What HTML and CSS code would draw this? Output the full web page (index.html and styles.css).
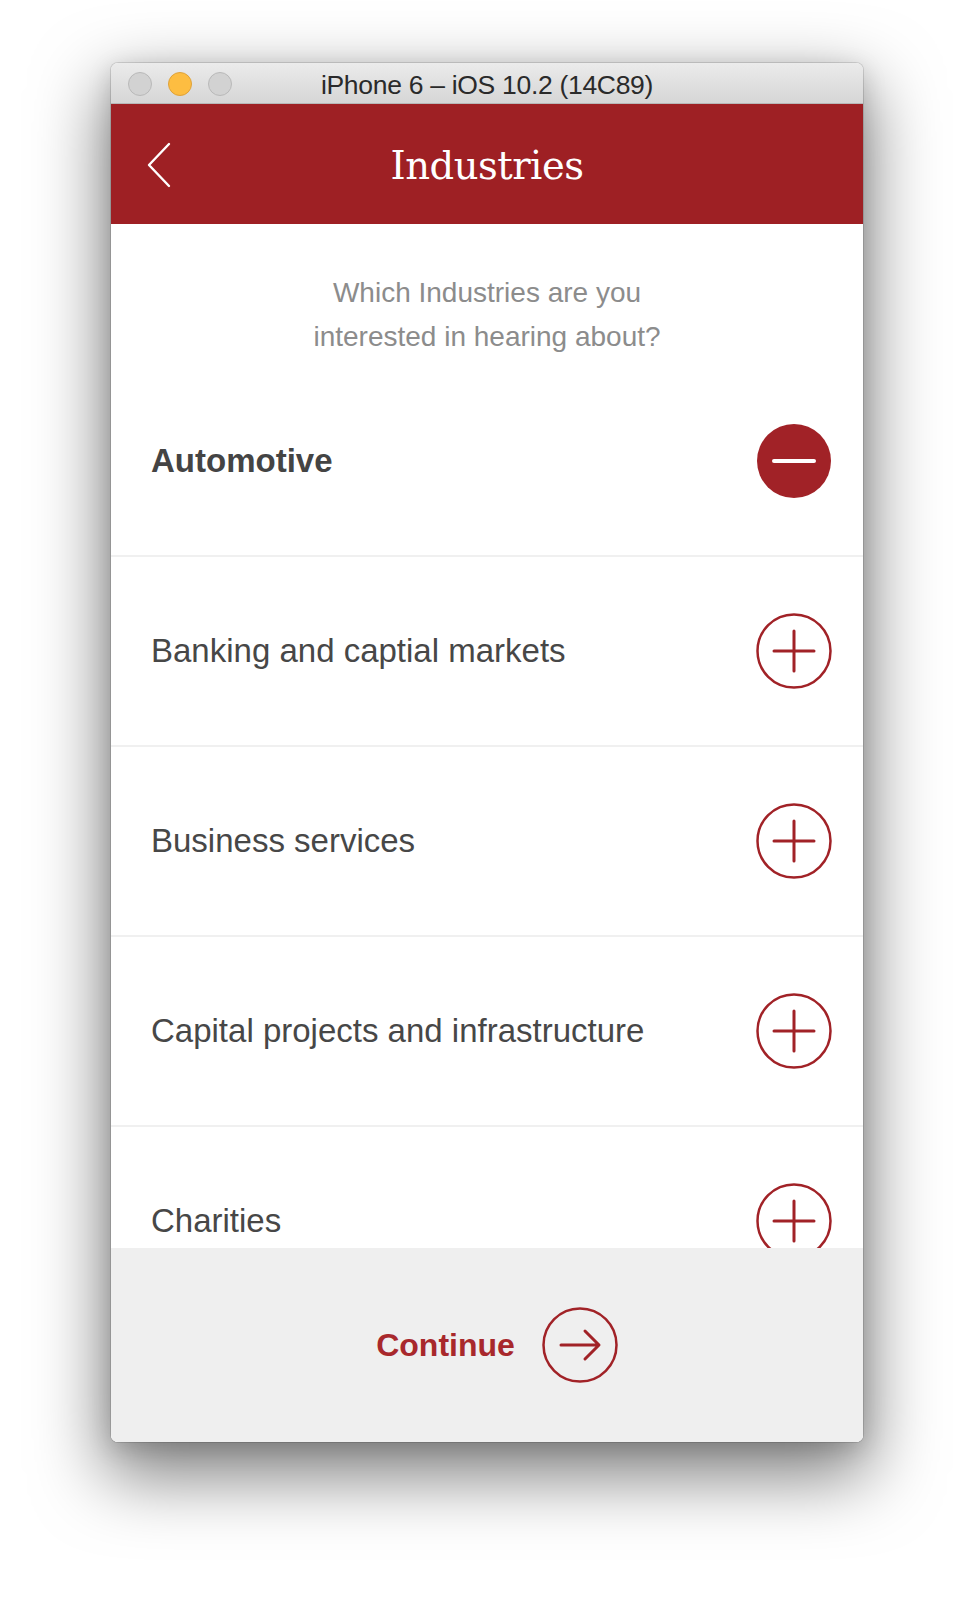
FILE: index.html
```html
<!DOCTYPE html>
<html lang="en">
<head>
<meta charset="utf-8">
<title>Industries</title>
<link rel="stylesheet" href="styles.css">
</head>
<body>
<div class="window">
  <div class="titlebar">
    <div class="lights">
      <span class="light"></span>
      <span class="light light-min"></span>
      <span class="light"></span>
    </div>
    <div class="window-title">iPhone 6 – iOS 10.2 (14C89)</div>
    <div class="titlebar-spacer"></div>
  </div>
  <div class="app">
    <header class="navbar">
      <button class="back" aria-label="Back">
        <svg width="26" height="46" viewBox="0 0 26 46"><path d="M23 2 L3 23 L23 44" fill="none" stroke="#fff" stroke-width="2.4" stroke-linecap="round" stroke-linejoin="round"/></svg>
      </button>
      <h1 class="nav-title">Industries</h1>
    </header>
    <main class="list-area">
      <p class="intro">Which Industries are you<br>interested in hearing about?</p>
      <ul class="list">
        <li class="row row-selected">
          <span class="row-label">Automotive</span>
          <svg class="toggle" width="76" height="76" viewBox="0 0 76 76"><circle cx="38" cy="38" r="37" fill="#a12227"/><line x1="18" y1="38" x2="58" y2="38" stroke="#fff" stroke-width="4" stroke-linecap="round"/></svg>
        </li>
        <li class="row">
          <span class="row-label">Banking and captial markets</span>
          <svg class="toggle" width="76" height="76" viewBox="0 0 76 76"><circle cx="38" cy="38" r="36.5" fill="none" stroke="#a12227" stroke-width="2.5"/><path d="M18 38 H58 M38 18 V58" stroke="#a12227" stroke-width="3" stroke-linecap="round"/></svg>
        </li>
        <li class="row">
          <span class="row-label">Business services</span>
          <svg class="toggle" width="76" height="76" viewBox="0 0 76 76"><circle cx="38" cy="38" r="36.5" fill="none" stroke="#a12227" stroke-width="2.5"/><path d="M18 38 H58 M38 18 V58" stroke="#a12227" stroke-width="3" stroke-linecap="round"/></svg>
        </li>
        <li class="row">
          <span class="row-label">Capital projects and infrastructure</span>
          <svg class="toggle" width="76" height="76" viewBox="0 0 76 76"><circle cx="38" cy="38" r="36.5" fill="none" stroke="#a12227" stroke-width="2.5"/><path d="M18 38 H58 M38 18 V58" stroke="#a12227" stroke-width="3" stroke-linecap="round"/></svg>
        </li>
        <li class="row">
          <span class="row-label">Charities</span>
          <svg class="toggle" width="76" height="76" viewBox="0 0 76 76"><circle cx="38" cy="38" r="36.5" fill="none" stroke="#a12227" stroke-width="2.5"/><path d="M18 38 H58 M38 18 V58" stroke="#a12227" stroke-width="3" stroke-linecap="round"/></svg>
        </li>
      </ul>
    </main>
    <footer class="footer">
      <button class="continue">
        <span class="continue-label">Continue</span>
        <svg width="76" height="76" viewBox="0 0 76 76"><circle cx="38" cy="38" r="36.5" fill="none" stroke="#a12227" stroke-width="2.5"/><path d="M19 38 H56 M43 24 L57 38 L43 52" fill="none" stroke="#a12227" stroke-width="3" stroke-linecap="round" stroke-linejoin="round"/></svg>
      </button>
    </footer>
  </div>
</div>
</body>
</html>
```

FILE: styles.css
```css
* {
  box-sizing: border-box;
}

html, body {
  margin: 0;
  padding: 0;
  background: #ffffff;
}

body {
  font-family: "Liberation Sans", Arial, sans-serif;
  padding: 63px 0 0 111px;
  height: 1602px;
  overflow: hidden;
}

.window {
  width: 752px;
  height: 1379px;
  border-radius: 7px;
  overflow: hidden;
  display: flex;
  flex-direction: column;
  box-shadow: 0 0 0 1px rgba(0, 0, 0, 0.12), 0 28px 70px 6px rgba(0, 0, 0, 0.5), 0 6px 24px rgba(0, 0, 0, 0.15);
}

.titlebar {
  height: 41px;
  flex: none;
  display: grid;
  grid-template-columns: 1fr auto 1fr;
  align-items: center;
  background: linear-gradient(#ebebeb, #d6d6d6);
  border-bottom: 1px solid #b8b8b8;
}

.lights {
  display: flex;
  gap: 16px;
  padding-left: 17px;
  padding-top: 2px;
}

.light {
  width: 24px;
  height: 24px;
  border-radius: 50%;
  background: #d2d2d2;
  border: 1px solid #b9b9b9;
}

.light-min {
  background: #fdbd41;
  border-color: #dfa23a;
}

.window-title {
  text-align: center;
  font-size: 26.5px;
  color: #2a2a2a;
  padding-top: 5px;
  letter-spacing: -0.3px;
  white-space: nowrap;
}

.app {
  flex: 1;
  display: flex;
  flex-direction: column;
  min-height: 0;
  background: #ffffff;
}

.navbar {
  height: 120px;
  flex: none;
  background: #9e2024;
  display: flex;
  align-items: center;
  position: relative;
}

.back {
  position: absolute;
  left: 35px;
  top: 38px;
  background: none;
  border: 0;
  padding: 0;
  line-height: 0;
}

.nav-title {
  flex: 1;
  margin: 0;
  text-align: center;
  font-family: "DejaVu Serif", Georgia, serif;
  font-weight: normal;
  font-size: 38.5px;
  color: #ffffff;
  letter-spacing: -0.5px;
  padding-top: 2px;
}

.list-area {
  flex: 1;
  min-height: 0;
  overflow: hidden;
}

.intro {
  margin: 0;
  padding: 47px 0 8px;
  text-align: center;
  font-size: 28px;
  line-height: 44px;
  color: #8c8c8c;
}

.list {
  list-style: none;
  margin: 0;
  padding: 0;
}

.row {
  height: 190px;
  display: flex;
  align-items: center;
  justify-content: space-between;
  padding: 0 31px 0 40px;
  border-bottom: 2px solid #f0f0f0;
}

.row-label {
  font-size: 33px;
  color: #474747;
}

.row-selected .row-label {
  font-weight: bold;
  color: #444444;
}

.toggle {
  flex: none;
}

.footer {
  height: 194px;
  flex: none;
  background: #efefef;
  display: flex;
  align-items: center;
  justify-content: center;
  padding-left: 20px;
}

.continue {
  display: flex;
  align-items: center;
  gap: 27px;
  background: none;
  border: 0;
  padding: 0;
  font-family: inherit;
}

.continue-label {
  font-size: 32px;
  font-weight: bold;
  color: #a8282c;
}
```
